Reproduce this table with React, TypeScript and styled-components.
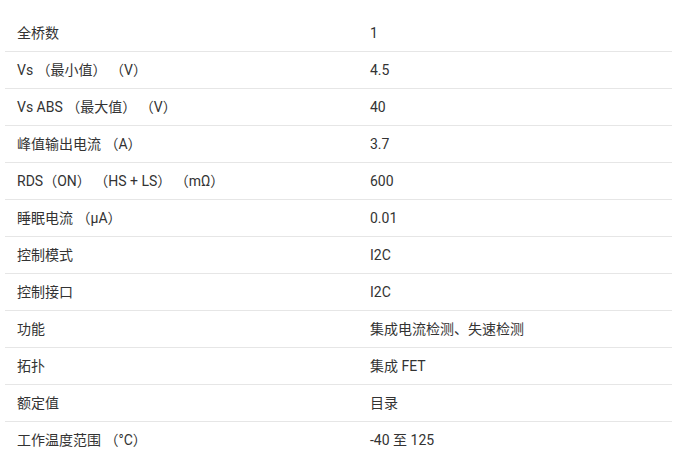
import React from "react";
import styled, { createGlobalStyle } from "styled-components";

const Global = createGlobalStyle`
  html, body { margin: 0; padding: 0; background: #fff; }
  body { font-family: Roboto, "Noto Sans CJK SC", sans-serif; }
`;

const Table = styled.div`
  display: flex;
  flex-direction: column;
  padding: 15px 2px 0 5px;
  width: 667px;
`;

const Row = styled.div`
  display: grid;
  grid-template-columns: 353px 1fr;
  height: 36px;
  align-items: center;
  border-bottom: 1px solid #e6e6e6;
`;

const Cell = styled.div`
  padding-left: 12px;
  font-size: 14px;
  line-height: 20px;
  color: #333;
  white-space: nowrap;
  margin-top: -1px;
`;

const rows: [string, string][] = [
  ["全桥数", "1"],
  ["Vs （最小值） （V）", "4.5"],
  ["Vs ABS （最大值） （V）", "40"],
  ["峰值输出电流 （A）", "3.7"],
  ["RDS（ON） （HS + LS） （mΩ）", "600"],
  ["睡眠电流 （µA）", "0.01"],
  ["控制模式", "I2C"],
  ["控制接口", "I2C"],
  ["功能", "集成电流检测、失速检测"],
  ["拓扑", "集成 FET"],
  ["额定值", "目录"],
  ["工作温度范围 （°C）", "-40 至 125"],
];

export default function App() {
  return (
    <>
      <Global />
      <Table>
        {rows.map(([k, v]) => (
          <Row key={k}>
            <Cell>{k}</Cell>
            <Cell>{v}</Cell>
          </Row>
        ))}
      </Table>
    </>
  );
}
